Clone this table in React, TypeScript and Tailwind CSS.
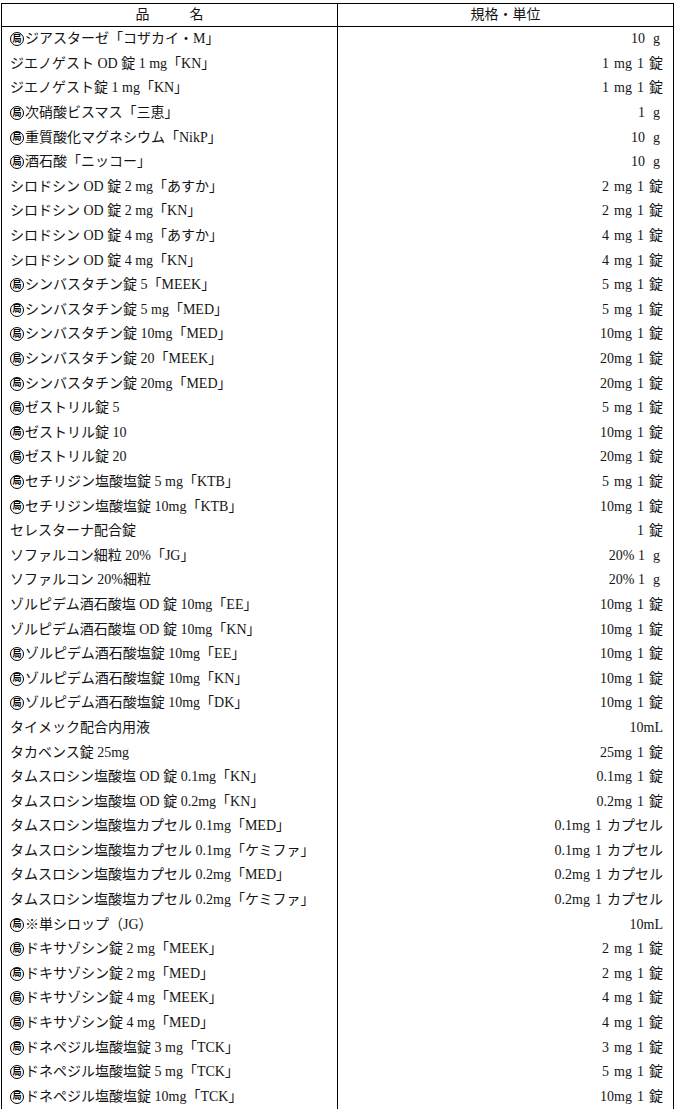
import React from "react";

type Row = [boolean, string, string];

const rows: Row[] = [
  [true, "ジアスターゼ「コザカイ・M」", "10 g"],
  [false, "ジエノゲスト OD 錠 1 mg「KN」", "1 mg 1 錠"],
  [false, "ジエノゲスト錠 1 mg「KN」", "1 mg 1 錠"],
  [true, "次硝酸ビスマス「三恵」", "1 g"],
  [true, "重質酸化マグネシウム「NikP」", "10 g"],
  [true, "酒石酸「ニッコー」", "10 g"],
  [false, "シロドシン OD 錠 2 mg「あすか」", "2 mg 1 錠"],
  [false, "シロドシン OD 錠 2 mg「KN」", "2 mg 1 錠"],
  [false, "シロドシン OD 錠 4 mg「あすか」", "4 mg 1 錠"],
  [false, "シロドシン OD 錠 4 mg「KN」", "4 mg 1 錠"],
  [true, "シンバスタチン錠 5「MEEK」", "5 mg 1 錠"],
  [true, "シンバスタチン錠 5 mg「MED」", "5 mg 1 錠"],
  [true, "シンバスタチン錠 10mg「MED」", "10mg 1 錠"],
  [true, "シンバスタチン錠 20「MEEK」", "20mg 1 錠"],
  [true, "シンバスタチン錠 20mg「MED」", "20mg 1 錠"],
  [true, "ゼストリル錠 5", "5 mg 1 錠"],
  [true, "ゼストリル錠 10", "10mg 1 錠"],
  [true, "ゼストリル錠 20", "20mg 1 錠"],
  [true, "セチリジン塩酸塩錠 5 mg「KTB」", "5 mg 1 錠"],
  [true, "セチリジン塩酸塩錠 10mg「KTB」", "10mg 1 錠"],
  [false, "セレスターナ配合錠", "1 錠"],
  [false, "ソファルコン細粒 20%「JG」", "20% 1 g"],
  [false, "ソファルコン 20%細粒", "20% 1 g"],
  [false, "ゾルピデム酒石酸塩 OD 錠 10mg「EE」", "10mg 1 錠"],
  [false, "ゾルピデム酒石酸塩 OD 錠 10mg「KN」", "10mg 1 錠"],
  [true, "ゾルピデム酒石酸塩錠 10mg「EE」", "10mg 1 錠"],
  [true, "ゾルピデム酒石酸塩錠 10mg「KN」", "10mg 1 錠"],
  [true, "ゾルピデム酒石酸塩錠 10mg「DK」", "10mg 1 錠"],
  [false, "タイメック配合内用液", "10mL"],
  [false, "タカベンス錠 25mg", "25mg 1 錠"],
  [false, "タムスロシン塩酸塩 OD 錠 0.1mg「KN」", "0.1mg 1 錠"],
  [false, "タムスロシン塩酸塩 OD 錠 0.2mg「KN」", "0.2mg 1 錠"],
  [false, "タムスロシン塩酸塩カプセル 0.1mg「MED」", "0.1mg 1 カプセル"],
  [false, "タムスロシン塩酸塩カプセル 0.1mg「ケミファ」", "0.1mg 1 カプセル"],
  [false, "タムスロシン塩酸塩カプセル 0.2mg「MED」", "0.2mg 1 カプセル"],
  [false, "タムスロシン塩酸塩カプセル 0.2mg「ケミファ」", "0.2mg 1 カプセル"],
  [true, "※単シロップ（JG）", "10mL"],
  [true, "ドキサゾシン錠 2 mg「MEEK」", "2 mg 1 錠"],
  [true, "ドキサゾシン錠 2 mg「MED」", "2 mg 1 錠"],
  [true, "ドキサゾシン錠 4 mg「MEEK」", "4 mg 1 錠"],
  [true, "ドキサゾシン錠 4 mg「MED」", "4 mg 1 錠"],
  [true, "ドネペジル塩酸塩錠 3 mg「TCK」", "3 mg 1 錠"],
  [true, "ドネペジル塩酸塩錠 5 mg「TCK」", "5 mg 1 錠"],
  [true, "ドネペジル塩酸塩錠 10mg「TCK」", "10mg 1 錠"],
];

function Mark() {
  return (
    <span className="inline-flex items-center justify-center w-[14px] h-[14px] rounded-full border-[1.5px] border-black text-[9px] font-bold leading-none mr-[1px] shrink-0 text-black">
      局
    </span>
  );
}

function Spec({ text }: { text: string }) {
  if (text.endsWith(" g")) {
    const head = text.slice(0, -2);
    return (
      <span className="inline-flex items-center">
        <span>{head}</span>
        <span className="inline-block w-[18px] text-right pr-[3px]">g</span>
      </span>
    );
  }
  return <span className="[word-spacing:1.5px]">{text}</span>;
}

export default function App() {
  return (
    <div className="w-[677px] h-[1109px] overflow-hidden bg-white pl-[1px] pt-[3px] text-[#141414] font-['Liberation_Serif','Noto_Sans_CJK_JP',serif] text-[14px]">
      <div className="w-[673px] border-x border-t border-black">
        <div className="flex h-[23px] border-b border-black">
          <div className="w-[336px] border-r border-black flex items-center justify-center gap-[40px] leading-none">
            <span>品</span>
            <span>名</span>
          </div>
          <div className="flex-1 flex items-center justify-center leading-none">
            規格・単位
          </div>
        </div>
        {rows.map(([mark, name, spec], i) => (
          <div key={i} className="flex h-[24.6px]">
            <div className="w-[336px] border-r border-black flex items-center pl-[8px] leading-none whitespace-nowrap">
              {mark && <Mark />}
              <span>{name}</span>
            </div>
            <div className="flex-1 flex items-center justify-end pr-[10px] leading-none whitespace-nowrap">
              <Spec text={spec} />
            </div>
          </div>
        ))}
      </div>
    </div>
  );
}
